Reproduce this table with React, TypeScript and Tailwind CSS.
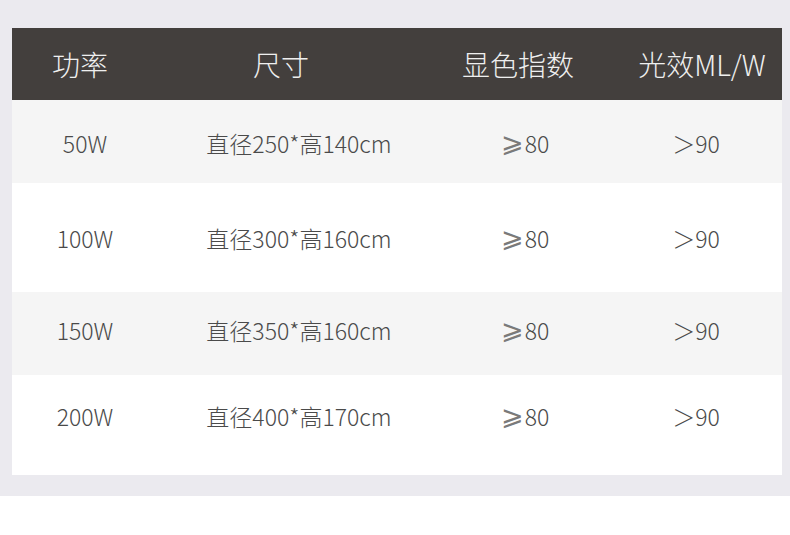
import React from "react";

const rows = [
  { p: "50W", s: "直径250*高140cm", h: "h-[83px]", pad: "pt-[3px]", bg: "bg-[#f5f5f5]" },
  { p: "100W", s: "直径300*高160cm", h: "h-[109px]", pad: "pt-[1px]", bg: "bg-white" },
  { p: "150W", s: "直径350*高160cm", h: "h-[83px]", pad: "pb-[7px]", bg: "bg-[#f5f5f5]" },
  { p: "200W", s: "直径400*高170cm", h: "h-[100px]", pad: "pb-[18px]", bg: "bg-white" },
];

export default function App() {
  return (
    <div
      className="w-[790px] h-[535px] bg-white"
      style={{ fontFamily: '"Noto Sans CJK SC", "Noto Sans", sans-serif' }}
    >
      <div className="bg-[#ebeaef] pt-[28px] pb-[21px] pl-[12px] pr-[8px]">
        <div className="grid grid-cols-[136px_266px_208px_160px] h-[72px] items-center bg-[#433f3d] text-[#efefef] text-[28px] font-light leading-none">
          <div className="text-center">功率</div>
          <div className="text-center">尺寸</div>
          <div className="text-center">显色指数</div>
          <div className="text-center">光效ML/W</div>
        </div>
        {rows.map((r) => (
          <div
            key={r.p}
            className={`grid grid-cols-[146px_282px_170px_172px] items-center ${r.h} ${r.pad} ${r.bg} text-[#4a4a4a] text-[23px] font-light leading-none`}
          >
            <div className="text-center">{r.p}</div>
            <div className="text-center">{r.s}</div>
            <div className="text-center">
              <span
                className="text-[27px] leading-[0] relative top-[-1px] mr-[1px] text-[#7a7a7a]"
                style={{ fontFamily: '"DejaVu Sans", sans-serif' }}
              >
                ⩾
              </span>
              80
            </div>
            <div className="text-center">＞90</div>
          </div>
        ))}
      </div>
    </div>
  );
}
